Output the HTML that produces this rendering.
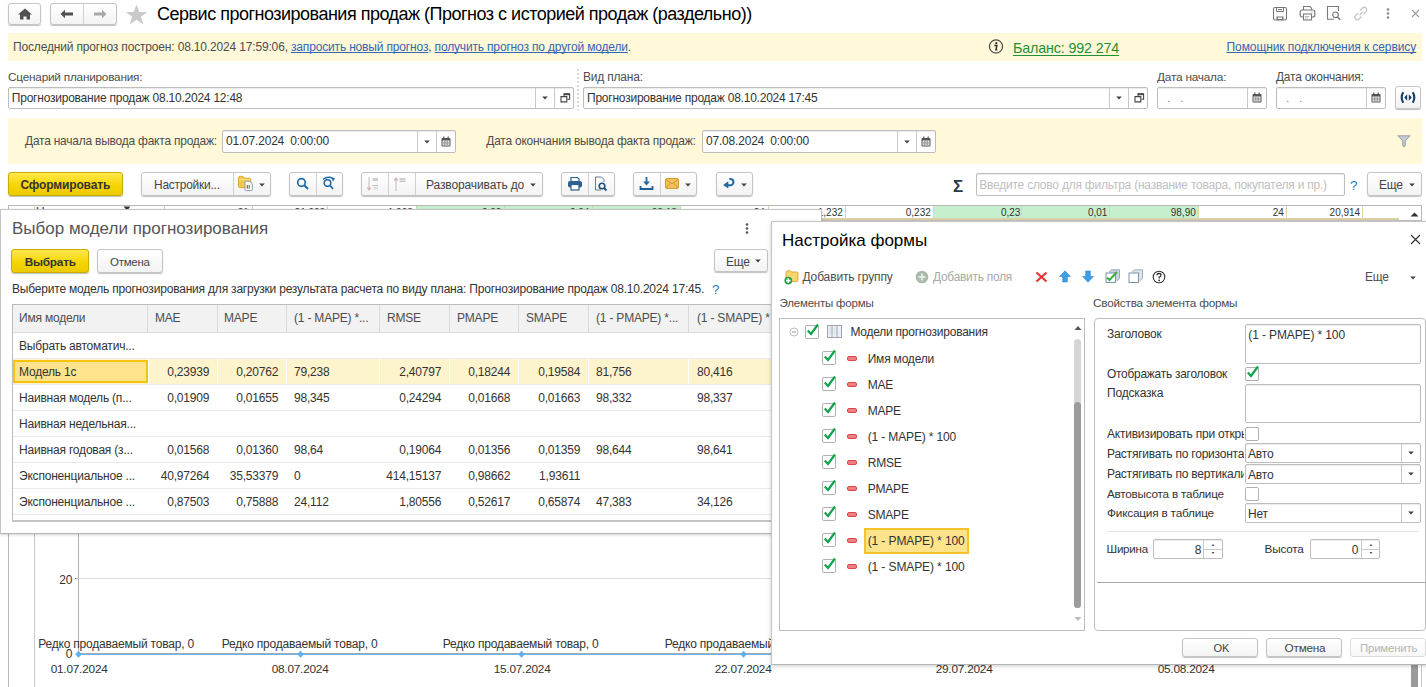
<!DOCTYPE html>
<html><head><meta charset="utf-8"><style>
html,body{margin:0;padding:0;width:1426px;height:687px;overflow:hidden;background:#fff;position:relative;}
.a{position:absolute;}
.t{position:absolute;white-space:nowrap;font-family:"Liberation Sans",sans-serif;}
u{text-decoration:underline;text-decoration-skip-ink:none;text-underline-offset:1px;}
</style></head><body>
<div class="a" style="left:8px;top:3px;width:33px;height:22px;box-sizing:border-box;border:1px solid #c4c4c4;border-radius:3px;background:linear-gradient(#fff,#f3f3f3);box-shadow:0 1px 1px rgba(0,0,0,.25);"></div>
<svg class="a" style="left:17px;top:8px;" width="16" height="12" viewBox="0 0 16 12"><path d="M8 0.5L15 6.5H13V11.5H9.5V8.5H6.5V11.5H3V6.5H1Z" fill="#505050"/></svg>
<div class="a" style="left:50px;top:3px;width:67px;height:22px;box-sizing:border-box;border:1px solid #c4c4c4;border-radius:3px;background:linear-gradient(#fff,#f3f3f3);box-shadow:0 1px 1px rgba(0,0,0,.25);"></div>
<div class="a" style="left:83px;top:4px;width:1px;height:20px;background:#d0d0d0;"></div>
<svg class="a" style="left:60px;top:9px;" width="14" height="10" viewBox="0 0 14 10"><path d="M0.5 5L5 0.8V3.6H13V6.4H5V9.2Z" fill="#505050"/></svg>
<svg class="a" style="left:93px;top:9px;" width="14" height="10" viewBox="0 0 14 10"><path d="M13.5 5L9 0.8V3.6H1V6.4H9V9.2Z" fill="#a8a8a8"/></svg>
<svg class="a" style="left:125px;top:4px;" width="23" height="21" viewBox="0 0 23 21"><path d="M11.5 0.5L14.3 8H22.3L15.8 12.8L18.3 20.5L11.5 15.8L4.7 20.5L7.2 12.8L0.7 8H8.7Z" fill="#c9c9c9"/></svg>
<div class="t" style="left:157px;top:5px;font-size:18px;line-height:18px;color:#000;letter-spacing:-0.5px;">Сервис прогнозирования продаж (Прогноз с историей продаж (раздельно))</div>
<svg class="a" style="left:1272px;top:6px;" width="16" height="15" viewBox="0 0 16 15"><rect x="1.5" y="1.5" width="13" height="12.5" rx="1.5" fill="none" stroke="#777" stroke-width="1.1"/><path d="M4.5 1.5V5.5H11.5V1.5M6 3.5H10" fill="none" stroke="#777" stroke-width="1"/><rect x="4.5" y="10.5" width="7" height="3.5" fill="#777"/><rect x="6" y="11.5" width="4" height="1.5" fill="#fff"/></svg>
<svg class="a" style="left:1299px;top:5px;" width="17" height="16" viewBox="0 0 17 16"><path d="M4.5 5V1.5H10.8L12.5 3.2V5" fill="none" stroke="#7a7a7a" stroke-width="1.1"/><rect x="1.2" y="5" width="14.6" height="7" rx="2" fill="none" stroke="#7a7a7a" stroke-width="1.2"/><rect x="4.5" y="9" width="8" height="6" fill="#fff" stroke="#7a7a7a" stroke-width="1.1"/><path d="M6 11.5H10M6 13H9" stroke="#9a9a9a" stroke-width="0.7"/><circle cx="13" cy="7" r="0.6" fill="#7a7a7a"/></svg>
<svg class="a" style="left:1326px;top:5px;" width="16" height="16" viewBox="0 0 16 16"><path d="M8 14.3H1.5V1.5H12.5V6" fill="none" stroke="#7a7a7a" stroke-width="1.1"/><circle cx="9.5" cy="9.8" r="2.8" fill="none" stroke="#7a7a7a" stroke-width="1.2"/><path d="M11.5 12L14.3 14.8" stroke="#7a7a7a" stroke-width="1.5"/></svg>
<svg class="a" style="left:1353px;top:6px;" width="16" height="15" viewBox="0 0 16 15"><path d="M6.5 9L9.5 6" stroke="#c4c4c4" stroke-width="1.3"/><path d="M7 4.5L9.5 2A2.3 2.3 0 0 1 13 5.5L10.5 8" fill="none" stroke="#c4c4c4" stroke-width="1.3"/><path d="M8.5 10.5L6 13A2.3 2.3 0 0 1 2.5 9.5L5 7" fill="none" stroke="#c4c4c4" stroke-width="1.3"/></svg>
<svg class="a" style="left:1386px;top:8px;" width="4" height="11" viewBox="0 0 4 11"><circle cx="2" cy="1.5" r="1.3" fill="#8a8a8a"/><circle cx="2" cy="5.5" r="1.3" fill="#8a8a8a"/><circle cx="2" cy="9.5" r="1.3" fill="#8a8a8a"/></svg>
<svg class="a" style="left:1411px;top:9px;" width="9" height="9" viewBox="0 0 9 9"><path d="M1 1L8 8M8 1L1 8" stroke="#9a9a9a" stroke-width="1.1"/></svg>
<div class="a" style="left:8px;top:33px;width:1414px;height:28px;background:#fff8d9;"></div>
<div class="t" style="left:13px;top:41px;font-size:12px;line-height:12px;letter-spacing:-0.165px;color:#4d4d4d;">Последний прогноз построен: 08.10.2024 17:59:06, <u style="color:#3565b4">запросить новый прогноз</u>, <u style="color:#3565b4">получить прогноз по другой модели</u>.</div>
<svg class="a" style="left:988px;top:39px;" width="16" height="15" viewBox="0 0 16 15"><circle cx="8" cy="7.5" r="6.6" fill="none" stroke="#4a4a4a" stroke-width="1.2"/><circle cx="8.3" cy="4.2" r="1.1" fill="#333"/><path d="M6.3 6.5H8.9L7.9 10.8H9.3" fill="none" stroke="#333" stroke-width="1.5"/></svg>
<div class="t" style="left:1013px;top:41px;font-size:14.3px;line-height:14.3px;color:#249034;letter-spacing:-0.15px;"><u style="text-underline-offset:2px">Баланс: 992 274</u></div>
<div class="t" style="left:1226.5px;top:41px;font-size:12px;line-height:12px;color:#3565b4;letter-spacing:-0.081px;"><u>Помощник подключения к сервису</u></div>
<div class="t" style="left:8px;top:71px;font-size:11.79px;line-height:11.79px;color:#4d4d4d;letter-spacing:-0.22px;">Сценарий планирования:</div>
<div class="t" style="left:583px;top:71px;font-size:12px;line-height:12px;color:#4d4d4d;letter-spacing:-0.2px;">Вид плана:</div>
<div class="t" style="left:1157px;top:72px;font-size:11.84px;line-height:11.84px;color:#4d4d4d;letter-spacing:-0.22px;">Дата начала:</div>
<div class="t" style="left:1276px;top:72px;font-size:11.95px;line-height:11.95px;color:#4d4d4d;letter-spacing:-0.22px;">Дата окончания:</div>
<div class="a" style="left:8px;top:87px;width:566px;height:22px;box-sizing:border-box;border:1px solid #bdbdbd;border-radius:2px;background:#fff;box-shadow:inset 0 1px 1px rgba(0,0,0,.08);"></div>
<div class="a" style="left:535px;top:88px;width:1px;height:20px;background:#c8c8c8;"></div>
<div class="a" style="left:554px;top:88px;width:1px;height:20px;background:#c8c8c8;"></div>
<svg class="a" style="left:541.5px;top:96px;" width="6" height="4" viewBox="0 0 6 4"><path d="M0.2 0.5H5.8L3 3.5Z" fill="#404040"/></svg>
<svg class="a" style="left:560px;top:93px;" width="11" height="10" viewBox="0 0 11 10"><path d="M4 3V0.9H9.6V6.3H7.4" fill="none" stroke="#444" stroke-width="1.1"/><path d="M4 1.4H9.6" stroke="#444" stroke-width="1.6"/><path d="M1 3.6H6.8V8.9H1Z" fill="none" stroke="#444" stroke-width="1.1"/></svg>
<div class="t" style="left:11.8px;top:92px;font-size:11.99px;line-height:11.99px;color:#333;letter-spacing:-0.22px;">Прогнозирование продаж 08.10.2024 12:48</div>
<div class="a" style="left:577px;top:69px;width:2px;height:41px;background:repeating-linear-gradient(#d8d8d8 0 2px,transparent 2px 4px);"></div>
<div class="a" style="left:583px;top:87px;width:565px;height:22px;box-sizing:border-box;border:1px solid #bdbdbd;border-radius:2px;background:#fff;box-shadow:inset 0 1px 1px rgba(0,0,0,.08);"></div>
<div class="a" style="left:1109px;top:88px;width:1px;height:20px;background:#c8c8c8;"></div>
<div class="a" style="left:1128px;top:88px;width:1px;height:20px;background:#c8c8c8;"></div>
<svg class="a" style="left:1115.5px;top:96px;" width="6" height="4" viewBox="0 0 6 4"><path d="M0.2 0.5H5.8L3 3.5Z" fill="#404040"/></svg>
<svg class="a" style="left:1134px;top:93px;" width="11" height="10" viewBox="0 0 11 10"><path d="M4 3V0.9H9.6V6.3H7.4" fill="none" stroke="#444" stroke-width="1.1"/><path d="M4 1.4H9.6" stroke="#444" stroke-width="1.6"/><path d="M1 3.6H6.8V8.9H1Z" fill="none" stroke="#444" stroke-width="1.1"/></svg>
<div class="t" style="left:587px;top:92px;font-size:11.99px;line-height:11.99px;color:#333;letter-spacing:-0.22px;">Прогнозирование продаж 08.10.2024 17:45</div>
<div class="a" style="left:1157px;top:87px;width:110px;height:22px;box-sizing:border-box;border:1px solid #bdbdbd;border-radius:2px;background:#fff;box-shadow:inset 0 1px 1px rgba(0,0,0,.08);"></div>
<div class="a" style="left:1247px;top:88px;width:1px;height:20px;background:#c8c8c8;"></div>
<svg class="a" style="left:1252px;top:92px;" width="10" height="11" viewBox="0 0 10 11"><rect x="0.5" y="2" width="9" height="8.5" rx="1" fill="#555"/><rect x="1.5" y="4.5" width="7" height="5" fill="#fff"/><path d="M1.5 6.2H8.5M1.5 7.9H8.5M3.8 4.5V9.5M6.2 4.5V9.5" stroke="#777" stroke-width="0.7"/><rect x="2.2" y="0.5" width="1.2" height="2.5" fill="#555"/><rect x="6.6" y="0.5" width="1.2" height="2.5" fill="#555"/></svg>
<div class="t" style="left:1167px;top:92px;font-size:11.7px;line-height:11.7px;color:#808080;">.&nbsp;&nbsp;&nbsp;.</div>
<div class="a" style="left:1276px;top:87px;width:110px;height:22px;box-sizing:border-box;border:1px solid #bdbdbd;border-radius:2px;background:#fff;box-shadow:inset 0 1px 1px rgba(0,0,0,.08);"></div>
<div class="a" style="left:1366px;top:88px;width:1px;height:20px;background:#c8c8c8;"></div>
<svg class="a" style="left:1371px;top:92px;" width="10" height="11" viewBox="0 0 10 11"><rect x="0.5" y="2" width="9" height="8.5" rx="1" fill="#555"/><rect x="1.5" y="4.5" width="7" height="5" fill="#fff"/><path d="M1.5 6.2H8.5M1.5 7.9H8.5M3.8 4.5V9.5M6.2 4.5V9.5" stroke="#777" stroke-width="0.7"/><rect x="2.2" y="0.5" width="1.2" height="2.5" fill="#555"/><rect x="6.6" y="0.5" width="1.2" height="2.5" fill="#555"/></svg>
<div class="t" style="left:1286px;top:92px;font-size:11.7px;line-height:11.7px;color:#808080;">.&nbsp;&nbsp;&nbsp;.</div>
<div class="a" style="left:1395px;top:86px;width:26px;height:23px;box-sizing:border-box;border:1px solid #c4c4c4;border-radius:3px;background:linear-gradient(#fff,#f3f3f3);box-shadow:0 1px 1px rgba(0,0,0,.25);"></div>
<svg class="a" style="left:1399px;top:91px;" width="18" height="13" viewBox="0 0 18 13"><path d="M4.2 1.2Q1.2 6.5 4.2 11.8" fill="none" stroke="#143f6a" stroke-width="2.1"/><path d="M13.8 1.2Q16.8 6.5 13.8 11.8" fill="none" stroke="#143f6a" stroke-width="2.1"/><path d="M8.2 3.3L5.2 6.5L8.2 9.7Z" fill="#143f6a"/><path d="M9.8 3.3L12.8 6.5L9.8 9.7Z" fill="#143f6a"/></svg>
<div class="a" style="left:8px;top:118px;width:1414px;height:46px;background:#fff8d9;"></div>
<div class="t" style="left:25px;top:135px;font-size:11.98px;line-height:11.98px;color:#4d4d4d;letter-spacing:-0.22px;">Дата начала вывода факта продаж:</div>
<div class="a" style="left:222px;top:130px;width:234px;height:23px;box-sizing:border-box;border:1px solid #bdbdbd;border-radius:2px;background:#fff;box-shadow:inset 0 1px 1px rgba(0,0,0,.08);"></div>
<div class="a" style="left:417px;top:131px;width:1px;height:21px;background:#c8c8c8;"></div>
<div class="a" style="left:436px;top:131px;width:1px;height:21px;background:#c8c8c8;"></div>
<svg class="a" style="left:423.5px;top:140px;" width="6" height="4" viewBox="0 0 6 4"><path d="M0.2 0.5H5.8L3 3.5Z" fill="#404040"/></svg>
<svg class="a" style="left:441px;top:136px;" width="10" height="11" viewBox="0 0 10 11"><rect x="0.5" y="2" width="9" height="8.5" rx="1" fill="#555"/><rect x="1.5" y="4.5" width="7" height="5" fill="#fff"/><path d="M1.5 6.2H8.5M1.5 7.9H8.5M3.8 4.5V9.5M6.2 4.5V9.5" stroke="#777" stroke-width="0.7"/><rect x="2.2" y="0.5" width="1.2" height="2.5" fill="#555"/><rect x="6.6" y="0.5" width="1.2" height="2.5" fill="#555"/></svg>
<div class="t" style="left:226px;top:135px;font-size:12px;line-height:12px;color:#333;letter-spacing:-0.198px;">01.07.2024&nbsp;&nbsp;0:00:00</div>
<div class="t" style="left:486.3px;top:136px;font-size:11.96px;line-height:11.96px;color:#4d4d4d;letter-spacing:-0.22px;">Дата окончания вывода факта продаж:</div>
<div class="a" style="left:702px;top:130px;width:234px;height:23px;box-sizing:border-box;border:1px solid #bdbdbd;border-radius:2px;background:#fff;box-shadow:inset 0 1px 1px rgba(0,0,0,.08);"></div>
<div class="a" style="left:897px;top:131px;width:1px;height:21px;background:#c8c8c8;"></div>
<div class="a" style="left:916px;top:131px;width:1px;height:21px;background:#c8c8c8;"></div>
<svg class="a" style="left:903.5px;top:140px;" width="6" height="4" viewBox="0 0 6 4"><path d="M0.2 0.5H5.8L3 3.5Z" fill="#404040"/></svg>
<svg class="a" style="left:921px;top:136px;" width="10" height="11" viewBox="0 0 10 11"><rect x="0.5" y="2" width="9" height="8.5" rx="1" fill="#555"/><rect x="1.5" y="4.5" width="7" height="5" fill="#fff"/><path d="M1.5 6.2H8.5M1.5 7.9H8.5M3.8 4.5V9.5M6.2 4.5V9.5" stroke="#777" stroke-width="0.7"/><rect x="2.2" y="0.5" width="1.2" height="2.5" fill="#555"/><rect x="6.6" y="0.5" width="1.2" height="2.5" fill="#555"/></svg>
<div class="t" style="left:706px;top:135px;font-size:12px;line-height:12px;color:#333;letter-spacing:-0.198px;">07.08.2024&nbsp;&nbsp;0:00:00</div>
<svg class="a" style="left:1397px;top:135px;" width="14" height="12" viewBox="0 0 14 12"><path d="M0.8 0.8H13.2L8.3 5.5V10.5Q8.3 11.5 7 11.5Q5.7 11.5 5.7 10.5V5.5Z" fill="#c5ccd6" stroke="#8f98a5" stroke-width="0.9"/></svg>
<div class="a" style="left:8px;top:172px;width:115px;height:24px;box-sizing:border-box;border:1px solid #c9ac00;border-radius:3px;background:linear-gradient(#ffe74d,#f5d400 60%,#eccb00);box-shadow:0 1px 1px rgba(0,0,0,.25);"></div>
<div class="t" style="left:20.5px;top:179px;font-size:12px;line-height:12px;color:#333;font-weight:bold;letter-spacing:-0.147px;">Сформировать</div>
<div class="a" style="left:141px;top:172px;width:130px;height:24px;box-sizing:border-box;border:1px solid #c4c4c4;border-radius:3px;background:linear-gradient(#fff,#f3f3f3);box-shadow:0 1px 1px rgba(0,0,0,.25);"></div>
<div class="a" style="left:233px;top:173px;width:1px;height:22px;background:#d0d0d0;"></div>
<div class="t" style="left:154px;top:180px;font-size:11.93px;line-height:11.93px;color:#444;letter-spacing:-0.22px;">Настройки...</div>
<svg class="a" style="left:237px;top:175px;" width="17" height="17" viewBox="0 0 17 17"><path d="M1.5 3.2Q1.5 1.3 3.3 1.3H5.2Q6.4 1.3 7 2.4L7.5 3.2H12.6Q13.8 3.2 13.8 4.4V11.5Q13.8 12.6 12.6 12.6H2.7Q1.5 12.6 1.5 11.5Z" fill="#f2c94c" stroke="#d9a22e" stroke-width="0.9"/><path d="M2.2 4.6H13.1" stroke="#f9e27a" stroke-width="1.2"/><path d="M8 6.2H12.6L15.3 8.9V14.4Q15.3 15.6 14.1 15.6H9.2Q8 15.6 8 14.4Z" fill="#fff" stroke="#8d9cab" stroke-width="1"/><rect x="9.7" y="10" width="1.4" height="3.6" fill="#e84848"/><rect x="11.6" y="10" width="1.4" height="3.6" fill="#3cc050"/></svg>
<svg class="a" style="left:259px;top:183px;" width="6" height="4" viewBox="0 0 6 4"><path d="M0.2 0.5H5.8L3 3.5Z" fill="#404040"/></svg>
<div class="a" style="left:289px;top:172px;width:54px;height:24px;box-sizing:border-box;border:1px solid #c4c4c4;border-radius:3px;background:linear-gradient(#fff,#f3f3f3);box-shadow:0 1px 1px rgba(0,0,0,.25);"></div>
<div class="a" style="left:316px;top:173px;width:1px;height:22px;background:#d0d0d0;"></div>
<svg class="a" style="left:296px;top:177px;" width="14" height="14" viewBox="0 0 14 14"><circle cx="5.5" cy="5.5" r="3.8" fill="none" stroke="#1f6aa5" stroke-width="1.7"/><path d="M8.3 8.3L12 12" stroke="#1f6aa5" stroke-width="2"/></svg>
<svg class="a" style="left:322px;top:176px;" width="14" height="15" viewBox="0 0 14 15"><circle cx="5.5" cy="7" r="3.3" fill="none" stroke="#1f6aa5" stroke-width="1.6"/><path d="M8 9.5L11 12.8" stroke="#1f6aa5" stroke-width="1.8"/><path d="M1 3.5Q6 -0.5 11 2.5" fill="none" stroke="#1f6aa5" stroke-width="1.4"/><path d="M9 1L13 2.5L11 5.5Z" fill="#1f6aa5"/></svg>
<div class="a" style="left:361px;top:172px;width:182px;height:24px;box-sizing:border-box;border:1px solid #c4c4c4;border-radius:3px;background:linear-gradient(#fff,#f3f3f3);box-shadow:0 1px 1px rgba(0,0,0,.25);"></div>
<div class="a" style="left:388px;top:173px;width:1px;height:22px;background:#d0d0d0;"></div>
<div class="a" style="left:415px;top:173px;width:1px;height:22px;background:#d0d0d0;"></div>
<svg class="a" style="left:366px;top:176px;" width="16" height="17" viewBox="0 0 16 17"><path d="M3 1V14" stroke="#c8b8b0" stroke-width="1"/><path d="M0.5 11.5L3 15L5.5 11.5Z" fill="#c8b8b0"/><rect x="6.5" y="2" width="5.5" height="3" fill="#cfcfcf"/><rect x="6.5" y="9" width="5.5" height="1" fill="#bdbdbd"/><rect x="7.5" y="11" width="4.5" height="2.5" fill="#dcdcdc"/></svg>
<svg class="a" style="left:393px;top:176px;" width="16" height="17" viewBox="0 0 16 17"><path d="M3 3V15" stroke="#c8b8b0" stroke-width="1"/><path d="M0.5 4.5L3 1L5.5 4.5Z" fill="#c8b8b0"/><rect x="6.5" y="2" width="6" height="2.5" fill="#cfcfcf"/><rect x="6.5" y="5" width="6" height="1" fill="#bdbdbd"/></svg>
<div class="t" style="left:426px;top:179px;font-size:12px;line-height:12px;color:#444;letter-spacing:-0.114px;">Разворачивать до</div>
<svg class="a" style="left:530px;top:183px;" width="6" height="4" viewBox="0 0 6 4"><path d="M0.2 0.5H5.8L3 3.5Z" fill="#404040"/></svg>
<div class="a" style="left:561px;top:172px;width:54px;height:24px;box-sizing:border-box;border:1px solid #c4c4c4;border-radius:3px;background:linear-gradient(#fff,#f3f3f3);box-shadow:0 1px 1px rgba(0,0,0,.25);"></div>
<div class="a" style="left:588px;top:173px;width:1px;height:22px;background:#d0d0d0;"></div>
<svg class="a" style="left:567px;top:176px;" width="16" height="15" viewBox="0 0 16 15"><path d="M4 5V1.5H10.5L12 3V5" fill="none" stroke="#2d5f8f" stroke-width="1.2"/><rect x="1" y="5" width="14" height="6.5" rx="2" fill="#2d5f8f"/><rect x="4" y="8.5" width="8" height="5.5" fill="#fff" stroke="#2d5f8f" stroke-width="1.2"/></svg>
<svg class="a" style="left:594px;top:176px;" width="14" height="16" viewBox="0 0 14 16"><path d="M7 14H1.5V1H7.5L10 3.5V6" fill="none" stroke="#5a7fa5" stroke-width="1"/><circle cx="8" cy="10" r="2.8" fill="none" stroke="#1f4f80" stroke-width="1.6"/><path d="M10 12L12.5 14.5" stroke="#1f4f80" stroke-width="1.8"/></svg>
<div class="a" style="left:633px;top:172px;width:64px;height:24px;box-sizing:border-box;border:1px solid #c4c4c4;border-radius:3px;background:linear-gradient(#fff,#f3f3f3);box-shadow:0 1px 1px rgba(0,0,0,.25);"></div>
<div class="a" style="left:660px;top:173px;width:1px;height:22px;background:#d0d0d0;"></div>
<svg class="a" style="left:639px;top:176px;" width="15" height="15" viewBox="0 0 15 15"><path d="M7.5 1V8" stroke="#1f6aa5" stroke-width="1.8"/><path d="M4 5.5L7.5 9.5L11 5.5Z" fill="#1f6aa5"/><path d="M1.5 10V13H13.5V10" fill="none" stroke="#1f5f95" stroke-width="1.8"/></svg>
<svg class="a" style="left:665px;top:178px;" width="15" height="11" viewBox="0 0 15 11"><rect x="0.5" y="0.5" width="13" height="10" rx="1.5" fill="#f3c260" stroke="#d59a2a"/><path d="M1 1.5L7 6L13 1.5M1 10L5 5.5M13 10L9 5.5" fill="none" stroke="#d08f20" stroke-width="0.9"/></svg>
<svg class="a" style="left:685px;top:183px;" width="6" height="4" viewBox="0 0 6 4"><path d="M0.2 0.5H5.8L3 3.5Z" fill="#404040"/></svg>
<div class="a" style="left:716px;top:172px;width:37px;height:24px;box-sizing:border-box;border:1px solid #c4c4c4;border-radius:3px;background:linear-gradient(#fff,#f3f3f3);box-shadow:0 1px 1px rgba(0,0,0,.25);"></div>
<svg class="a" style="left:722px;top:177px;" width="14" height="13" viewBox="0 0 14 13"><path d="M5.5 8.3H8.3A3.1 3.1 0 0 0 8.3 2.1H7.3" fill="none" stroke="#1f6aa5" stroke-width="2"/><path d="M1.2 7.9L6.3 4.2V11.6Z" fill="#1f6aa5"/></svg>
<svg class="a" style="left:741px;top:183px;" width="6" height="4" viewBox="0 0 6 4"><path d="M0.2 0.5H5.8L3 3.5Z" fill="#404040"/></svg>
<div class="t" style="left:953px;top:178px;font-size:17px;line-height:17px;color:#2a3a4a;font-weight:bold;">Σ</div>
<div class="a" style="left:976px;top:173px;width:369px;height:23px;box-sizing:border-box;border:1px solid #bdbdbd;border-radius:2px;background:#fff;box-shadow:inset 0 1px 1px rgba(0,0,0,.08);"></div>
<div class="t" style="left:979.2px;top:179px;font-size:12px;line-height:12px;color:#c0c0c0;letter-spacing:-0.219px;">Введите слово для фильтра (название товара, покупателя и пр.)</div>
<div class="t" style="left:1350px;top:179px;font-size:13.5px;line-height:13.5px;color:#2a7ac0;">?</div>
<div class="a" style="left:1367px;top:172px;width:55px;height:24px;box-sizing:border-box;border:1px solid #c4c4c4;border-radius:3px;background:linear-gradient(#fff,#f3f3f3);box-shadow:0 1px 1px rgba(0,0,0,.25);"></div>
<div class="t" style="left:1379px;top:179px;font-size:12px;line-height:12px;color:#444;letter-spacing:-0.2px;">Еще</div>
<svg class="a" style="left:1409px;top:183px;" width="6" height="4" viewBox="0 0 6 4"><path d="M0.2 0.5H5.8L3 3.5Z" fill="#404040"/></svg>
<div class="a" style="left:8px;top:205px;width:1414px;height:16px;box-sizing:border-box;border:1px solid #b8b8b8;border-bottom:1px solid #c8c8c8;background:#fff;"></div>
<div class="a" style="left:416px;top:206px;width:264px;height:14px;background:#c6efce;"></div>
<div class="a" style="left:934px;top:206px;width:264px;height:14px;background:#c6efce;"></div>
<div class="a" style="left:9px;top:218px;width:1390px;height:2px;background:#ddd2a4;"></div>
<div class="a" style="left:34px;top:206px;width:1px;height:14px;background:#e0d4a8;"></div>
<div class="a" style="left:164px;top:206px;width:1px;height:14px;background:#e0d4a8;"></div>
<div class="a" style="left:252px;top:206px;width:1px;height:14px;background:#e0d4a8;"></div>
<div class="a" style="left:327px;top:206px;width:1px;height:14px;background:#e0d4a8;"></div>
<div class="a" style="left:416px;top:206px;width:1px;height:14px;background:#e0d4a8;"></div>
<div class="a" style="left:504px;top:206px;width:1px;height:14px;background:#e0d4a8;"></div>
<div class="a" style="left:592px;top:206px;width:1px;height:14px;background:#e0d4a8;"></div>
<div class="a" style="left:680px;top:206px;width:1px;height:14px;background:#e0d4a8;"></div>
<div class="a" style="left:768px;top:206px;width:1px;height:14px;background:#e0d4a8;"></div>
<div class="a" style="left:845px;top:206px;width:1px;height:14px;background:#e0d4a8;"></div>
<div class="a" style="left:933px;top:206px;width:1px;height:14px;background:#e0d4a8;"></div>
<div class="a" style="left:1021px;top:206px;width:1px;height:14px;background:#e0d4a8;"></div>
<div class="a" style="left:1109px;top:206px;width:1px;height:14px;background:#e0d4a8;"></div>
<div class="a" style="left:1198px;top:206px;width:1px;height:14px;background:#e0d4a8;"></div>
<div class="a" style="left:1286px;top:206px;width:1px;height:14px;background:#e0d4a8;"></div>
<div class="a" style="left:1362px;top:206px;width:1px;height:14px;background:#e0d4a8;"></div>
<div class="t" style="right:1177.5px;top:207px;font-size:11.5px;line-height:11.5px;color:#333;letter-spacing:0.0001px;transform:scaleX(0.87);transform-origin:right center;">21</div>
<div class="t" style="right:1101.0px;top:207px;font-size:11.5px;line-height:11.5px;color:#333;letter-spacing:0.0001px;transform:scaleX(0.87);transform-origin:right center;">21,003</div>
<div class="t" style="right:1013.0px;top:207px;font-size:11.5px;line-height:11.5px;color:#333;letter-spacing:0.0001px;transform:scaleX(0.87);transform-origin:right center;">1,003</div>
<div class="t" style="right:925.0px;top:207px;font-size:11.5px;line-height:11.5px;color:#333;letter-spacing:0.0001px;transform:scaleX(0.87);transform-origin:right center;">0,00</div>
<div class="t" style="right:837.0px;top:207px;font-size:11.5px;line-height:11.5px;color:#333;letter-spacing:0.0001px;transform:scaleX(0.87);transform-origin:right center;">0,04</div>
<div class="t" style="right:749.0px;top:207px;font-size:11.5px;line-height:11.5px;color:#333;letter-spacing:0.0001px;transform:scaleX(0.87);transform-origin:right center;">93,13</div>
<div class="t" style="right:661.0px;top:207px;font-size:11.5px;line-height:11.5px;color:#333;letter-spacing:0.0001px;transform:scaleX(0.87);transform-origin:right center;">24</div>
<div class="t" style="right:583.0px;top:207px;font-size:11.5px;line-height:11.5px;color:#333;letter-spacing:0.0001px;transform:scaleX(0.87);transform-origin:right center;">1,232</div>
<div class="t" style="right:495.0px;top:207px;font-size:11.5px;line-height:11.5px;color:#333;letter-spacing:0.0001px;transform:scaleX(0.87);transform-origin:right center;">0,232</div>
<div class="t" style="right:406.0px;top:207px;font-size:11.5px;line-height:11.5px;color:#333;letter-spacing:0.0001px;transform:scaleX(0.87);transform-origin:right center;">0,23</div>
<div class="t" style="right:319.0px;top:207px;font-size:11.5px;line-height:11.5px;color:#333;letter-spacing:0.0001px;transform:scaleX(0.87);transform-origin:right center;">0,01</div>
<div class="t" style="right:230.0px;top:207px;font-size:11.5px;line-height:11.5px;color:#333;letter-spacing:0.0001px;transform:scaleX(0.87);transform-origin:right center;">98,90</div>
<div class="t" style="right:142.0px;top:207px;font-size:11.5px;line-height:11.5px;color:#333;letter-spacing:0.0001px;transform:scaleX(0.87);transform-origin:right center;">24</div>
<div class="t" style="right:66.0px;top:207px;font-size:11.5px;line-height:11.5px;color:#333;letter-spacing:0.0001px;transform:scaleX(0.87);transform-origin:right center;">20,914</div>
<div class="t" style="left:36px;top:206px;font-size:12px;line-height:12px;color:#333;letter-spacing:-0.2px;">Номенклатура</div>
<svg class="a" style="left:123px;top:206px;" width="8" height="5" viewBox="0 0 8 5"><path d="M0.5 0.5H7.5L4 4.5Z" fill="#333"/></svg>
<svg class="a" style="left:1410px;top:212px;" width="9" height="5" viewBox="0 0 9 5"><path d="M0.5 4.5H8.5L4.5 0.5Z" fill="#333"/></svg>
<div class="a" style="left:8px;top:533px;width:1px;height:154px;background:#b8b8b8;"></div>
<div class="a" style="left:34px;top:533px;width:1px;height:154px;background:#c8c8c8;"></div>
<div class="a" style="left:78px;top:533px;width:1px;height:121px;background:#b0b0b0;"></div>
<div class="a" style="left:75px;top:578px;width:700px;height:1px;background:#dcdcdc;"></div>
<div class="a" style="left:75px;top:578px;width:3px;height:1px;background:#9a9a9a;"></div>
<div class="t" style="right:1353.8px;top:574px;font-size:12px;line-height:12px;color:#333;letter-spacing:-0.2px;">20</div>
<div class="t" style="right:1353.8px;top:648px;font-size:12px;line-height:12px;color:#333;letter-spacing:-0.2px;">0</div>
<div class="a" style="left:78px;top:653px;width:700px;height:1px;background:#a4aab0;"></div>
<div class="a" style="left:78px;top:654px;width:700px;height:1px;background:#6cb4ee;"></div>
<div class="a" style="left:78px;top:654px;width:700px;height:0px;"></div>
<svg class="a" style="left:74px;top:650px;" width="9" height="9" viewBox="0 0 9 9"><path d="M4.5 0.8L7.8 4.3L4.5 7.8L1.2 4.3Z" fill="#62b0f2"/></svg>
<svg class="a" style="left:296px;top:650px;" width="9" height="9" viewBox="0 0 9 9"><path d="M4.5 0.8L7.8 4.3L4.5 7.8L1.2 4.3Z" fill="#62b0f2"/></svg>
<svg class="a" style="left:517px;top:650px;" width="9" height="9" viewBox="0 0 9 9"><path d="M4.5 0.8L7.8 4.3L4.5 7.8L1.2 4.3Z" fill="#62b0f2"/></svg>
<svg class="a" style="left:739px;top:650px;" width="9" height="9" viewBox="0 0 9 9"><path d="M4.5 0.8L7.8 4.3L4.5 7.8L1.2 4.3Z" fill="#62b0f2"/></svg>
<div class="t" style="left:-33.9px;width:300px;text-align:center;top:638px;font-size:12px;line-height:12px;color:#333;letter-spacing:-0.204px;">Редко продаваемый товар, 0</div>
<div class="t" style="left:149.6px;width:300px;text-align:center;top:638px;font-size:12px;line-height:12px;color:#333;letter-spacing:-0.204px;">Редко продаваемый товар, 0</div>
<div class="t" style="left:370.7px;width:300px;text-align:center;top:638px;font-size:12px;line-height:12px;color:#333;letter-spacing:-0.204px;">Редко продаваемый товар, 0</div>
<div class="t" style="left:592.6px;width:300px;text-align:center;top:638px;font-size:12px;line-height:12px;color:#333;letter-spacing:-0.204px;">Редко продаваемый товар, 0</div>
<div class="t" style="left:-70.89px;width:300px;text-align:center;top:664px;font-size:11.82px;line-height:11.82px;color:#333;letter-spacing:-0.22px;">01.07.2024</div>
<div class="t" style="left:150.11px;width:300px;text-align:center;top:664px;font-size:11.82px;line-height:11.82px;color:#333;letter-spacing:-0.22px;">08.07.2024</div>
<div class="t" style="left:372.11px;width:300px;text-align:center;top:664px;font-size:11.82px;line-height:11.82px;color:#333;letter-spacing:-0.22px;">15.07.2024</div>
<div class="t" style="left:593.11px;width:300px;text-align:center;top:664px;font-size:11.82px;line-height:11.82px;color:#333;letter-spacing:-0.22px;">22.07.2024</div>
<div class="t" style="left:814.11px;width:300px;text-align:center;top:664px;font-size:11.82px;line-height:11.82px;color:#333;letter-spacing:-0.22px;">29.07.2024</div>
<div class="t" style="left:1036.11px;width:300px;text-align:center;top:664px;font-size:11.82px;line-height:11.82px;color:#333;letter-spacing:-0.22px;">05.08.2024</div>
<div class="a" style="left:1411px;top:664px;width:7px;height:23px;background:#9a9a9a;"></div>
<div class="a" style="left:1421px;top:664px;width:1px;height:23px;background:#c8c8c8;"></div>
<div class="a" style="left:0px;top:209px;width:822px;height:325px;box-sizing:border-box;border:1px solid #c4c4c4;border-bottom-color:#b4b4b4;background:#fff;box-shadow:0 1px 3px rgba(0,0,0,.18);"></div>
<div class="t" style="left:12px;top:220px;font-size:17px;line-height:17px;color:#555;">Выбор модели прогнозирования</div>
<svg class="a" style="left:745px;top:223px;" width="4" height="11" viewBox="0 0 4 11"><circle cx="2" cy="1.5" r="1.3" fill="#555"/><circle cx="2" cy="5.5" r="1.3" fill="#555"/><circle cx="2" cy="9.5" r="1.3" fill="#555"/></svg>
<div class="a" style="left:11px;top:249px;width:78px;height:24px;box-sizing:border-box;border:1px solid #c9ac00;border-radius:3px;background:linear-gradient(#ffe74d,#f5d400 60%,#eccb00);box-shadow:0 1px 1px rgba(0,0,0,.25);"></div>
<div class="t" style="left:24.7px;top:256px;font-size:11.78px;line-height:11.78px;color:#333;font-weight:bold;letter-spacing:-0.22px;">Выбрать</div>
<div class="a" style="left:97px;top:249px;width:66px;height:24px;box-sizing:border-box;border:1px solid #c4c4c4;border-radius:3px;background:linear-gradient(#fff,#f3f3f3);box-shadow:0 1px 1px rgba(0,0,0,.25);"></div>
<div class="t" style="left:110px;top:257px;font-size:11.46px;line-height:11.46px;color:#444;letter-spacing:-0.22px;">Отмена</div>
<div class="a" style="left:714px;top:249px;width:54px;height:23px;box-sizing:border-box;border:1px solid #c4c4c4;border-radius:3px;background:linear-gradient(#fff,#f3f3f3);box-shadow:0 1px 1px rgba(0,0,0,.25);"></div>
<div class="t" style="left:726px;top:256px;font-size:12px;line-height:12px;color:#444;letter-spacing:-0.2px;">Еще</div>
<svg class="a" style="left:755px;top:259px;" width="6" height="4" viewBox="0 0 6 4"><path d="M0.2 0.5H5.8L3 3.5Z" fill="#404040"/></svg>
<div class="t" style="left:12px;top:283px;font-size:12px;line-height:12px;color:#333;letter-spacing:-0.197px;">Выберите модель прогнозирования для загрузки результата расчета по виду плана: Прогнозирование продаж 08.10.2024 17:45.</div>
<div class="t" style="left:712px;top:283px;font-size:13.5px;line-height:13.5px;color:#2a7ac0;">?</div>
<div class="a" style="left:12px;top:304px;width:810px;height:218px;box-sizing:border-box;border:1px solid #bcbcbc;border-bottom:2px solid #c4c4c4;background:#fff;"></div>
<div class="a" style="left:13px;top:305px;width:808px;height:27px;background:#f2f2f2;"></div>
<div class="a" style="left:13px;top:332px;width:808px;height:1px;background:#dcdcdc;"></div>
<div class="a" style="left:147px;top:305px;width:1px;height:27px;background:#dadada;"></div>
<div class="a" style="left:217px;top:305px;width:1px;height:27px;background:#dadada;"></div>
<div class="a" style="left:286px;top:305px;width:1px;height:27px;background:#dadada;"></div>
<div class="a" style="left:379px;top:305px;width:1px;height:27px;background:#dadada;"></div>
<div class="a" style="left:449px;top:305px;width:1px;height:27px;background:#dadada;"></div>
<div class="a" style="left:518px;top:305px;width:1px;height:27px;background:#dadada;"></div>
<div class="a" style="left:588px;top:305px;width:1px;height:27px;background:#dadada;"></div>
<div class="a" style="left:688px;top:305px;width:1px;height:27px;background:#dadada;"></div>
<div class="t" style="left:19px;top:312px;font-size:12px;line-height:12px;color:#4d4d4d;letter-spacing:-0.2px;">Имя модели</div>
<div class="t" style="left:155px;top:312px;font-size:12px;line-height:12px;color:#4d4d4d;letter-spacing:-0.2px;">MAE</div>
<div class="t" style="left:224px;top:312px;font-size:12px;line-height:12px;color:#4d4d4d;letter-spacing:-0.2px;">MAPE</div>
<div class="t" style="left:294px;top:312px;font-size:12px;line-height:12px;color:#4d4d4d;letter-spacing:-0.2px;">(1 - MAPE) *...</div>
<div class="t" style="left:387px;top:312px;font-size:12px;line-height:12px;color:#4d4d4d;letter-spacing:-0.2px;">RMSE</div>
<div class="t" style="left:457px;top:312px;font-size:12px;line-height:12px;color:#4d4d4d;letter-spacing:-0.2px;">PMAPE</div>
<div class="t" style="left:526px;top:312px;font-size:12px;line-height:12px;color:#4d4d4d;letter-spacing:-0.2px;">SMAPE</div>
<div class="t" style="left:596px;top:312px;font-size:12px;line-height:12px;color:#4d4d4d;letter-spacing:-0.2px;">(1 - PMAPE) *...</div>
<div class="t" style="left:697px;top:312px;font-size:12px;line-height:12px;color:#4d4d4d;letter-spacing:-0.2px;">(1 - SMAPE) *</div>
<div class="t" style="left:19px;top:340px;font-size:12px;line-height:12px;color:#333;letter-spacing:-0.2px;">Выбрать автоматич...</div>
<div class="a" style="left:13px;top:358px;width:808px;height:1px;background:#ebebeb;"></div>
<div class="a" style="left:13px;top:359px;width:808px;height:25px;background:#fdf3cc;"></div>
<div class="a" style="left:13px;top:360px;width:135px;height:23px;box-sizing:border-box;border:2px solid #f8c30a;background:#fde38c;"></div>
<div class="a" style="left:148px;top:359px;width:1px;height:25px;background:#ffffff;"></div>
<div class="a" style="left:217px;top:359px;width:1px;height:25px;background:#ffffff;"></div>
<div class="a" style="left:286px;top:359px;width:1px;height:25px;background:#ffffff;"></div>
<div class="a" style="left:379px;top:359px;width:1px;height:25px;background:#ffffff;"></div>
<div class="a" style="left:449px;top:359px;width:1px;height:25px;background:#ffffff;"></div>
<div class="a" style="left:518px;top:359px;width:1px;height:25px;background:#ffffff;"></div>
<div class="a" style="left:588px;top:359px;width:1px;height:25px;background:#ffffff;"></div>
<div class="a" style="left:688px;top:359px;width:1px;height:25px;background:#ffffff;"></div>
<div class="t" style="left:19px;top:366px;font-size:12px;line-height:12px;color:#333;letter-spacing:-0.2px;">Модель 1с</div>
<div class="t" style="right:1216.8px;top:366px;font-size:12px;line-height:12px;color:#333;letter-spacing:-0.2px;">0,23939</div>
<div class="t" style="right:1147.8px;top:366px;font-size:12px;line-height:12px;color:#333;letter-spacing:-0.2px;">0,20762</div>
<div class="t" style="right:984.8px;top:366px;font-size:12px;line-height:12px;color:#333;letter-spacing:-0.2px;">2,40797</div>
<div class="t" style="right:915.8px;top:366px;font-size:12px;line-height:12px;color:#333;letter-spacing:-0.2px;">0,18244</div>
<div class="t" style="right:845.8px;top:366px;font-size:12px;line-height:12px;color:#333;letter-spacing:-0.2px;">0,19584</div>
<div class="t" style="left:294px;top:366px;font-size:12px;line-height:12px;color:#333;letter-spacing:-0.2px;">79,238</div>
<div class="t" style="left:596px;top:366px;font-size:12px;line-height:12px;color:#333;letter-spacing:-0.2px;">81,756</div>
<div class="t" style="left:697px;top:366px;font-size:12px;line-height:12px;color:#333;letter-spacing:-0.2px;">80,416</div>
<div class="a" style="left:13px;top:384px;width:808px;height:1px;background:#ebebeb;"></div>
<div class="t" style="left:19px;top:392px;font-size:12px;line-height:12px;color:#333;letter-spacing:-0.2px;">Наивная модель (п...</div>
<div class="t" style="right:1216.8px;top:392px;font-size:12px;line-height:12px;color:#333;letter-spacing:-0.2px;">0,01909</div>
<div class="t" style="right:1147.8px;top:392px;font-size:12px;line-height:12px;color:#333;letter-spacing:-0.2px;">0,01655</div>
<div class="t" style="right:984.8px;top:392px;font-size:12px;line-height:12px;color:#333;letter-spacing:-0.2px;">0,24294</div>
<div class="t" style="right:915.8px;top:392px;font-size:12px;line-height:12px;color:#333;letter-spacing:-0.2px;">0,01668</div>
<div class="t" style="right:845.8px;top:392px;font-size:12px;line-height:12px;color:#333;letter-spacing:-0.2px;">0,01663</div>
<div class="t" style="left:294px;top:392px;font-size:12px;line-height:12px;color:#333;letter-spacing:-0.2px;">98,345</div>
<div class="t" style="left:596px;top:392px;font-size:12px;line-height:12px;color:#333;letter-spacing:-0.2px;">98,332</div>
<div class="t" style="left:697px;top:392px;font-size:12px;line-height:12px;color:#333;letter-spacing:-0.2px;">98,337</div>
<div class="a" style="left:13px;top:410px;width:808px;height:1px;background:#ebebeb;"></div>
<div class="t" style="left:19px;top:418px;font-size:12px;line-height:12px;color:#333;letter-spacing:-0.2px;">Наивная недельная...</div>
<div class="a" style="left:13px;top:436px;width:808px;height:1px;background:#ebebeb;"></div>
<div class="t" style="left:19px;top:444px;font-size:12px;line-height:12px;color:#333;letter-spacing:-0.2px;">Наивная годовая (з...</div>
<div class="t" style="right:1216.8px;top:444px;font-size:12px;line-height:12px;color:#333;letter-spacing:-0.2px;">0,01568</div>
<div class="t" style="right:1147.8px;top:444px;font-size:12px;line-height:12px;color:#333;letter-spacing:-0.2px;">0,01360</div>
<div class="t" style="right:984.8px;top:444px;font-size:12px;line-height:12px;color:#333;letter-spacing:-0.2px;">0,19064</div>
<div class="t" style="right:915.8px;top:444px;font-size:12px;line-height:12px;color:#333;letter-spacing:-0.2px;">0,01356</div>
<div class="t" style="right:845.8px;top:444px;font-size:12px;line-height:12px;color:#333;letter-spacing:-0.2px;">0,01359</div>
<div class="t" style="left:294px;top:444px;font-size:12px;line-height:12px;color:#333;letter-spacing:-0.2px;">98,64</div>
<div class="t" style="left:596px;top:444px;font-size:12px;line-height:12px;color:#333;letter-spacing:-0.2px;">98,644</div>
<div class="t" style="left:697px;top:444px;font-size:12px;line-height:12px;color:#333;letter-spacing:-0.2px;">98,641</div>
<div class="a" style="left:13px;top:462px;width:808px;height:1px;background:#ebebeb;"></div>
<div class="t" style="left:19px;top:470px;font-size:12px;line-height:12px;color:#333;letter-spacing:-0.2px;">Экспоненциальное ...</div>
<div class="t" style="right:1216.8px;top:470px;font-size:12px;line-height:12px;color:#333;letter-spacing:-0.2px;">40,97264</div>
<div class="t" style="right:1147.8px;top:470px;font-size:12px;line-height:12px;color:#333;letter-spacing:-0.2px;">35,53379</div>
<div class="t" style="right:984.8px;top:470px;font-size:12px;line-height:12px;color:#333;letter-spacing:-0.2px;">414,15137</div>
<div class="t" style="right:915.8px;top:470px;font-size:12px;line-height:12px;color:#333;letter-spacing:-0.2px;">0,98662</div>
<div class="t" style="right:845.8px;top:470px;font-size:12px;line-height:12px;color:#333;letter-spacing:-0.2px;">1,93611</div>
<div class="t" style="left:294px;top:470px;font-size:12px;line-height:12px;color:#333;letter-spacing:-0.2px;">0</div>
<div class="a" style="left:13px;top:488px;width:808px;height:1px;background:#ebebeb;"></div>
<div class="t" style="left:19px;top:496px;font-size:12px;line-height:12px;color:#333;letter-spacing:-0.2px;">Экспоненциальное ...</div>
<div class="t" style="right:1216.8px;top:496px;font-size:12px;line-height:12px;color:#333;letter-spacing:-0.2px;">0,87503</div>
<div class="t" style="right:1147.8px;top:496px;font-size:12px;line-height:12px;color:#333;letter-spacing:-0.2px;">0,75888</div>
<div class="t" style="right:984.8px;top:496px;font-size:12px;line-height:12px;color:#333;letter-spacing:-0.2px;">1,80556</div>
<div class="t" style="right:915.8px;top:496px;font-size:12px;line-height:12px;color:#333;letter-spacing:-0.2px;">0,52617</div>
<div class="t" style="right:845.8px;top:496px;font-size:12px;line-height:12px;color:#333;letter-spacing:-0.2px;">0,65874</div>
<div class="t" style="left:294px;top:496px;font-size:12px;line-height:12px;color:#333;letter-spacing:-0.2px;">24,112</div>
<div class="t" style="left:596px;top:496px;font-size:12px;line-height:12px;color:#333;letter-spacing:-0.2px;">47,383</div>
<div class="t" style="left:697px;top:496px;font-size:12px;line-height:12px;color:#333;letter-spacing:-0.2px;">34,126</div>
<div class="a" style="left:13px;top:514px;width:808px;height:1px;background:#ebebeb;"></div>
<div class="a" style="left:771px;top:221px;width:660px;height:444px;box-sizing:border-box;border:1px solid #c4c4c4;border-bottom-color:#b4b4b4;background:#fff;box-shadow:0 1px 4px rgba(0,0,0,.2);"></div>
<div class="t" style="left:782px;top:232px;font-size:17px;line-height:17px;color:#000;">Настройка формы</div>
<svg class="a" style="left:1410px;top:234px;" width="11" height="11" viewBox="0 0 11 11"><path d="M1 1L10 10M10 1L1 10" stroke="#333" stroke-width="1.2"/></svg>
<svg class="a" style="left:784px;top:269px;" width="15" height="16" viewBox="0 0 15 16"><path d="M2 4Q2 1.5 4.5 1.5Q6.5 1.5 7.2 3H12.8Q14 3 14 4.2V11.3Q14 12.5 12.8 12.5H3.2Q2 12.5 2 11.3Z" fill="#f8d66e" stroke="#dca43a" stroke-width="0.9"/><circle cx="4.3" cy="11.6" r="3.9" fill="#22a046"/><path d="M4.3 9.3V13.9M2 11.6H6.6" stroke="#fff" stroke-width="1.6"/></svg>
<div class="t" style="left:802.5px;top:271px;font-size:12px;line-height:12px;color:#4d4d4d;letter-spacing:-0.141px;">Добавить группу</div>
<svg class="a" style="left:915px;top:270px;" width="14" height="14" viewBox="0 0 14 14"><circle cx="7" cy="7" r="6.3" fill="#a9bba9"/><path d="M7 3.5V10.5M3.5 7H10.5" stroke="#e8ece9" stroke-width="1.8"/></svg>
<div class="t" style="left:933px;top:272px;font-size:11.88px;line-height:11.88px;color:#a8a8a8;letter-spacing:-0.22px;">Добавить поля</div>
<svg class="a" style="left:1035px;top:271px;" width="13" height="12" viewBox="0 0 13 12"><path d="M1.5 1.5L11.5 10.5M11.5 1.5L1.5 10.5" stroke="#e03535" stroke-width="2.2"/></svg>
<svg class="a" style="left:1059px;top:270px;" width="12" height="13" viewBox="0 0 12 13"><path d="M6 0.8L11.3 6.5H8.3V12H3.7V6.5H0.7Z" fill="#3f9ee8" stroke="#2a7fc8" stroke-width="0.6"/></svg>
<svg class="a" style="left:1082px;top:270px;" width="12" height="13" viewBox="0 0 12 13"><path d="M6 12.2L11.3 6.5H8.3V1H3.7V6.5H0.7Z" fill="#3f9ee8" stroke="#2a7fc8" stroke-width="0.6"/></svg>
<svg class="a" style="left:1105px;top:269px;" width="16" height="15" viewBox="0 0 16 15"><path d="M4 3L6.5 0.8H14.5V9L12 12" fill="#c8d2dc" stroke="#8a9aaa" stroke-width="0.8"/><rect x="1" y="4" width="9.5" height="9.5" fill="#fff" stroke="#6d86a0" stroke-width="0.9"/><path d="M2 8.5L4.5 11L12 3" fill="none" stroke="#3ab03a" stroke-width="2"/></svg>
<svg class="a" style="left:1128px;top:269px;" width="16" height="15" viewBox="0 0 16 15"><path d="M4 3L6.5 0.8H14.5V9L12 12" fill="#dfe5ea" stroke="#8a9aaa" stroke-width="0.8"/><rect x="1" y="4" width="9.5" height="9.5" fill="#fff" stroke="#6d86a0" stroke-width="0.9"/></svg>
<svg class="a" style="left:1152px;top:270px;" width="14" height="14" viewBox="0 0 14 14"><circle cx="7" cy="7" r="5.8" fill="none" stroke="#333" stroke-width="1.1"/><path d="M5 5.3Q5 3.5 7 3.5Q9 3.5 9 5.2Q9 6.4 7.2 7.2V8.5" fill="none" stroke="#333" stroke-width="1.3"/><circle cx="7.2" cy="10.3" r="0.9" fill="#333"/></svg>
<div class="t" style="left:1365px;top:271px;font-size:12px;line-height:12px;color:#4d4d4d;letter-spacing:-0.2px;">Еще</div>
<svg class="a" style="left:1410px;top:276px;" width="6" height="4" viewBox="0 0 6 4"><path d="M0.2 0.5H5.8L3 3.5Z" fill="#404040"/></svg>
<div class="t" style="left:779.6px;top:298px;font-size:11.52px;line-height:11.52px;color:#4d4d4d;letter-spacing:-0.22px;">Элементы формы</div>
<div class="t" style="left:1093px;top:297px;font-size:11.75px;line-height:11.75px;color:#4d4d4d;letter-spacing:-0.22px;">Свойства элемента формы</div>
<div class="a" style="left:779px;top:318px;width:306px;height:313px;box-sizing:border-box;border:1px solid #bdbdbd;background:#fff;"></div>
<svg class="a" style="left:789px;top:327px;" width="10" height="10" viewBox="0 0 10 10"><circle cx="5" cy="5" r="4" fill="none" stroke="#b5b5b5" stroke-width="0.9"/><path d="M3 5H7" stroke="#999" stroke-width="1"/></svg>
<div class="a" style="left:805px;top:325px;width:14px;height:14px;box-sizing:border-box;border:1px solid #b0b0b0;border-radius:2px;background:#fff;"></div>
<svg class="a" style="left:806px;top:323px;" width="14" height="14" viewBox="0 0 14 14"><path d="M1.8 7.5L5 11L12 1.5" fill="none" stroke="#11a34a" stroke-width="2.2"/></svg>
<svg class="a" style="left:827px;top:325px;" width="15" height="13" viewBox="0 0 15 13"><rect x="0.5" y="0.5" width="14" height="12" fill="#eef1f4" stroke="#9aa4b0"/><path d="M5 0.5V12.5M10 0.5V12.5" stroke="#9aa4b0"/><path d="M2 3H4M2 5H4M2 7H4M2 9H4M6.5 3H8.5M6.5 5H8.5M6.5 7H8.5M6.5 9H8.5" stroke="#cfd6dd" stroke-width="0.8"/></svg>
<div class="t" style="left:850.4px;top:327px;font-size:11.97px;line-height:11.97px;color:#333;letter-spacing:-0.22px;">Модели прогнозирования</div>
<div class="a" style="left:822px;top:351px;width:14px;height:14px;box-sizing:border-box;border:1px solid #b0b0b0;border-radius:2px;background:#fff;"></div>
<svg class="a" style="left:823px;top:349px;" width="14" height="14" viewBox="0 0 14 14"><path d="M1.8 7.5L5 11L12 1.5" fill="none" stroke="#11a34a" stroke-width="2.2"/></svg>
<div class="a" style="left:847px;top:356px;width:10px;height:5px;box-sizing:border-box;border:1px solid #dc4646;background:#ee8080;border-radius:2px;"></div>
<div class="t" style="left:867.7px;top:353px;font-size:12px;line-height:12px;color:#333;letter-spacing:-0.2px;">Имя модели</div>
<div class="a" style="left:822px;top:377px;width:14px;height:14px;box-sizing:border-box;border:1px solid #b0b0b0;border-radius:2px;background:#fff;"></div>
<svg class="a" style="left:823px;top:375px;" width="14" height="14" viewBox="0 0 14 14"><path d="M1.8 7.5L5 11L12 1.5" fill="none" stroke="#11a34a" stroke-width="2.2"/></svg>
<div class="a" style="left:847px;top:382px;width:10px;height:5px;box-sizing:border-box;border:1px solid #dc4646;background:#ee8080;border-radius:2px;"></div>
<div class="t" style="left:867.7px;top:379px;font-size:12px;line-height:12px;color:#333;letter-spacing:-0.2px;">MAE</div>
<div class="a" style="left:822px;top:403px;width:14px;height:14px;box-sizing:border-box;border:1px solid #b0b0b0;border-radius:2px;background:#fff;"></div>
<svg class="a" style="left:823px;top:401px;" width="14" height="14" viewBox="0 0 14 14"><path d="M1.8 7.5L5 11L12 1.5" fill="none" stroke="#11a34a" stroke-width="2.2"/></svg>
<div class="a" style="left:847px;top:408px;width:10px;height:5px;box-sizing:border-box;border:1px solid #dc4646;background:#ee8080;border-radius:2px;"></div>
<div class="t" style="left:867.7px;top:405px;font-size:12px;line-height:12px;color:#333;letter-spacing:-0.2px;">MAPE</div>
<div class="a" style="left:822px;top:429px;width:14px;height:14px;box-sizing:border-box;border:1px solid #b0b0b0;border-radius:2px;background:#fff;"></div>
<svg class="a" style="left:823px;top:427px;" width="14" height="14" viewBox="0 0 14 14"><path d="M1.8 7.5L5 11L12 1.5" fill="none" stroke="#11a34a" stroke-width="2.2"/></svg>
<div class="a" style="left:847px;top:434px;width:10px;height:5px;box-sizing:border-box;border:1px solid #dc4646;background:#ee8080;border-radius:2px;"></div>
<div class="t" style="left:867.7px;top:431px;font-size:12px;line-height:12px;color:#333;letter-spacing:-0.14px;">(1 - MAPE) * 100</div>
<div class="a" style="left:822px;top:455px;width:14px;height:14px;box-sizing:border-box;border:1px solid #b0b0b0;border-radius:2px;background:#fff;"></div>
<svg class="a" style="left:823px;top:453px;" width="14" height="14" viewBox="0 0 14 14"><path d="M1.8 7.5L5 11L12 1.5" fill="none" stroke="#11a34a" stroke-width="2.2"/></svg>
<div class="a" style="left:847px;top:460px;width:10px;height:5px;box-sizing:border-box;border:1px solid #dc4646;background:#ee8080;border-radius:2px;"></div>
<div class="t" style="left:867.7px;top:457px;font-size:12px;line-height:12px;color:#333;letter-spacing:-0.2px;">RMSE</div>
<div class="a" style="left:822px;top:481px;width:14px;height:14px;box-sizing:border-box;border:1px solid #b0b0b0;border-radius:2px;background:#fff;"></div>
<svg class="a" style="left:823px;top:479px;" width="14" height="14" viewBox="0 0 14 14"><path d="M1.8 7.5L5 11L12 1.5" fill="none" stroke="#11a34a" stroke-width="2.2"/></svg>
<div class="a" style="left:847px;top:486px;width:10px;height:5px;box-sizing:border-box;border:1px solid #dc4646;background:#ee8080;border-radius:2px;"></div>
<div class="t" style="left:867.7px;top:483px;font-size:12px;line-height:12px;color:#333;letter-spacing:-0.2px;">PMAPE</div>
<div class="a" style="left:822px;top:507px;width:14px;height:14px;box-sizing:border-box;border:1px solid #b0b0b0;border-radius:2px;background:#fff;"></div>
<svg class="a" style="left:823px;top:505px;" width="14" height="14" viewBox="0 0 14 14"><path d="M1.8 7.5L5 11L12 1.5" fill="none" stroke="#11a34a" stroke-width="2.2"/></svg>
<div class="a" style="left:847px;top:512px;width:10px;height:5px;box-sizing:border-box;border:1px solid #dc4646;background:#ee8080;border-radius:2px;"></div>
<div class="t" style="left:867.7px;top:509px;font-size:12px;line-height:12px;color:#333;letter-spacing:-0.2px;">SMAPE</div>
<div class="a" style="left:864px;top:528px;width:105px;height:26px;box-sizing:border-box;border:2px solid #f5c42a;background:#fde38c;"></div>
<div class="a" style="left:822px;top:533px;width:14px;height:14px;box-sizing:border-box;border:1px solid #b0b0b0;border-radius:2px;background:#fff;"></div>
<svg class="a" style="left:823px;top:531px;" width="14" height="14" viewBox="0 0 14 14"><path d="M1.8 7.5L5 11L12 1.5" fill="none" stroke="#11a34a" stroke-width="2.2"/></svg>
<div class="a" style="left:847px;top:538px;width:10px;height:5px;box-sizing:border-box;border:1px solid #dc4646;background:#ee8080;border-radius:2px;"></div>
<div class="t" style="left:867.7px;top:535px;font-size:12px;line-height:12px;color:#333;letter-spacing:-0.106px;">(1 - PMAPE) * 100</div>
<div class="a" style="left:822px;top:559px;width:14px;height:14px;box-sizing:border-box;border:1px solid #b0b0b0;border-radius:2px;background:#fff;"></div>
<svg class="a" style="left:823px;top:557px;" width="14" height="14" viewBox="0 0 14 14"><path d="M1.8 7.5L5 11L12 1.5" fill="none" stroke="#11a34a" stroke-width="2.2"/></svg>
<div class="a" style="left:847px;top:564px;width:10px;height:5px;box-sizing:border-box;border:1px solid #dc4646;background:#ee8080;border-radius:2px;"></div>
<div class="t" style="left:867.7px;top:561px;font-size:12px;line-height:12px;color:#333;letter-spacing:-0.106px;">(1 - SMAPE) * 100</div>
<svg class="a" style="left:1074px;top:325px;" width="8" height="6" viewBox="0 0 8 6"><path d="M0.5 5H7.5L4 1Z" fill="#555"/></svg>
<div class="a" style="left:1074px;top:339px;width:7px;height:269px;background:#d6d6d6;border-radius:4px;"></div>
<div class="a" style="left:1074px;top:402px;width:7px;height:206px;background:#9c9c9c;border-radius:4px;"></div>
<svg class="a" style="left:1074px;top:616px;" width="8" height="6" viewBox="0 0 8 6"><path d="M0.5 1H7.5L4 5Z" fill="#bdbdbd"/></svg>
<div class="a" style="left:1094px;top:318px;width:332px;height:313px;box-sizing:border-box;border:1px solid #bdbdbd;border-radius:4px;background:#fff;"></div>
<div class="t" style="left:1107px;top:328px;font-size:12px;line-height:12px;color:#333;letter-spacing:-0.215px;">Заголовок</div>
<div class="a" style="left:1245px;top:324px;width:176px;height:40px;box-sizing:border-box;border:1px solid #bdbdbd;border-radius:2px;background:#fff;box-shadow:inset 0 1px 1px rgba(0,0,0,.08);"></div>
<div class="t" style="left:1248.3px;top:329px;font-size:12px;line-height:12px;color:#333;letter-spacing:-0.119px;">(1 - PMAPE) * 100</div>
<div class="t" style="left:1107px;top:369px;font-size:11.89px;line-height:11.89px;color:#333;letter-spacing:-0.22px;">Отображать заголовок</div>
<div class="a" style="left:1245px;top:367px;width:14px;height:14px;box-sizing:border-box;border:1px solid #b0b0b0;border-radius:2px;background:#fff;"></div>
<svg class="a" style="left:1246px;top:365px;" width="14" height="14" viewBox="0 0 14 14"><path d="M1.8 7.5L5 11L12 1.5" fill="none" stroke="#11a34a" stroke-width="2.2"/></svg>
<div class="t" style="left:1107px;top:387px;font-size:12px;line-height:12px;color:#333;letter-spacing:-0.185px;">Подсказка</div>
<div class="a" style="left:1245px;top:384px;width:176px;height:39px;box-sizing:border-box;border:1px solid #bdbdbd;border-radius:2px;background:#fff;box-shadow:inset 0 1px 1px rgba(0,0,0,.08);"></div>
<div class="t" style="left:1107px;top:428px;width:137px;overflow:hidden;font-size:12px;line-height:12px;letter-spacing:-0.22px;color:#333;">Активизировать при открытии</div>
<div class="a" style="left:1245px;top:427px;width:14px;height:14px;box-sizing:border-box;border:1px solid #b0b0b0;border-radius:2px;background:#fff;"></div>
<div class="t" style="left:1107px;top:448px;width:137px;overflow:hidden;font-size:12px;line-height:12px;letter-spacing:-0.22px;color:#333;">Растягивать по горизонтали</div>
<div class="a" style="left:1245px;top:443px;width:176px;height:20px;box-sizing:border-box;border:1px solid #bdbdbd;border-radius:2px;background:#fff;box-shadow:inset 0 1px 1px rgba(0,0,0,.08);"></div>
<div class="a" style="left:1401px;top:444px;width:1px;height:18px;background:#c8c8c8;"></div>
<svg class="a" style="left:1408px;top:451px;" width="6" height="4" viewBox="0 0 6 4"><path d="M0.2 0.5H5.8L3 3.5Z" fill="#404040"/></svg>
<div class="t" style="left:1248px;top:448px;font-size:12px;line-height:12px;color:#333;letter-spacing:-0.2px;">Авто</div>
<div class="t" style="left:1107px;top:468px;width:137px;overflow:hidden;font-size:12px;line-height:12px;letter-spacing:-0.22px;color:#333;">Растягивать по вертикали</div>
<div class="a" style="left:1245px;top:464px;width:176px;height:20px;box-sizing:border-box;border:1px solid #bdbdbd;border-radius:2px;background:#fff;box-shadow:inset 0 1px 1px rgba(0,0,0,.08);"></div>
<div class="a" style="left:1401px;top:465px;width:1px;height:18px;background:#c8c8c8;"></div>
<svg class="a" style="left:1408px;top:472px;" width="6" height="4" viewBox="0 0 6 4"><path d="M0.2 0.5H5.8L3 3.5Z" fill="#404040"/></svg>
<div class="t" style="left:1248px;top:469px;font-size:12px;line-height:12px;color:#333;letter-spacing:-0.2px;">Авто</div>
<div class="t" style="left:1107px;top:488px;font-size:11.71px;line-height:11.71px;color:#333;letter-spacing:-0.22px;">Автовысота в таблице</div>
<div class="a" style="left:1245px;top:487px;width:14px;height:14px;box-sizing:border-box;border:1px solid #b0b0b0;border-radius:2px;background:#fff;"></div>
<div class="t" style="left:1107px;top:508px;font-size:11.83px;line-height:11.83px;color:#333;letter-spacing:-0.22px;">Фиксация в таблице</div>
<div class="a" style="left:1245px;top:503px;width:176px;height:20px;box-sizing:border-box;border:1px solid #bdbdbd;border-radius:2px;background:#fff;box-shadow:inset 0 1px 1px rgba(0,0,0,.08);"></div>
<div class="a" style="left:1401px;top:504px;width:1px;height:18px;background:#c8c8c8;"></div>
<svg class="a" style="left:1408px;top:511px;" width="6" height="4" viewBox="0 0 6 4"><path d="M0.2 0.5H5.8L3 3.5Z" fill="#404040"/></svg>
<div class="t" style="left:1248px;top:508px;font-size:12px;line-height:12px;color:#333;letter-spacing:-0.2px;">Нет</div>
<div class="a" style="left:1107px;top:531px;width:312px;height:1px;background:#e4e4e4;"></div>
<div class="t" style="left:1106.5px;top:544px;font-size:11.57px;line-height:11.57px;color:#333;letter-spacing:-0.22px;">Ширина</div>
<div class="a" style="left:1153px;top:539px;width:70px;height:20px;box-sizing:border-box;border:1px solid #bdbdbd;border-radius:2px;background:#fff;box-shadow:inset 0 1px 1px rgba(0,0,0,.08);"></div>
<div class="a" style="left:1203px;top:540px;width:1px;height:18px;background:#c8c8c8;"></div>
<div class="a" style="left:1204px;top:549px;width:18px;height:1px;background:#c8c8c8;"></div>
<svg class="a" style="left:1209px;top:542px;" width="8" height="14" viewBox="0 0 8 14"><path d="M2.5 4H5.5L4 2Z" fill="#555"/><path d="M2.5 10H5.5L4 12Z" fill="#555"/></svg>
<div class="t" style="right:224.8px;top:544px;font-size:12px;line-height:12px;color:#333;letter-spacing:-0.2px;">8</div>
<div class="t" style="left:1264.6px;top:543px;font-size:11.74px;line-height:11.74px;color:#333;letter-spacing:-0.22px;">Высота</div>
<div class="a" style="left:1310px;top:539px;width:70px;height:20px;box-sizing:border-box;border:1px solid #bdbdbd;border-radius:2px;background:#fff;box-shadow:inset 0 1px 1px rgba(0,0,0,.08);"></div>
<div class="a" style="left:1361px;top:540px;width:1px;height:18px;background:#c8c8c8;"></div>
<div class="a" style="left:1362px;top:549px;width:18px;height:1px;background:#c8c8c8;"></div>
<svg class="a" style="left:1367px;top:542px;" width="8" height="14" viewBox="0 0 8 14"><path d="M2.5 4H5.5L4 2Z" fill="#555"/><path d="M2.5 10H5.5L4 12Z" fill="#555"/></svg>
<div class="t" style="right:67.8px;top:544px;font-size:12px;line-height:12px;color:#333;letter-spacing:-0.2px;">0</div>
<div class="a" style="left:1097px;top:582px;width:329px;height:1px;background:#a8a8a8;"></div>
<div class="a" style="left:1182px;top:638px;width:76px;height:19px;box-sizing:border-box;border:1px solid #c4c4c4;border-radius:3px;background:linear-gradient(#fff,#f3f3f3);box-shadow:0 1px 1px rgba(0,0,0,.25);"></div>
<div class="t" style="left:1071.31px;width:300px;text-align:center;top:643px;font-size:11.09px;line-height:11.09px;color:#444;letter-spacing:-0.22px;">OK</div>
<div class="a" style="left:1266px;top:638px;width:76px;height:19px;box-sizing:border-box;border:1px solid #c4c4c4;border-radius:3px;background:linear-gradient(#fff,#f3f3f3);box-shadow:0 1px 1px rgba(0,0,0,.25);"></div>
<div class="t" style="left:1155.01px;width:300px;text-align:center;top:642px;font-size:11.76px;line-height:11.76px;color:#444;letter-spacing:-0.22px;">Отмена</div>
<div class="a" style="left:1350px;top:638px;width:76px;height:19px;box-sizing:border-box;border:1px solid #dcdcdc;border-radius:3px;background:linear-gradient(#fff,#f7f7f7);"></div>
<div class="t" style="left:1238.61px;width:300px;text-align:center;top:643px;font-size:11.45px;line-height:11.45px;color:#b5b5b5;letter-spacing:-0.22px;">Применить</div>
</body></html>
